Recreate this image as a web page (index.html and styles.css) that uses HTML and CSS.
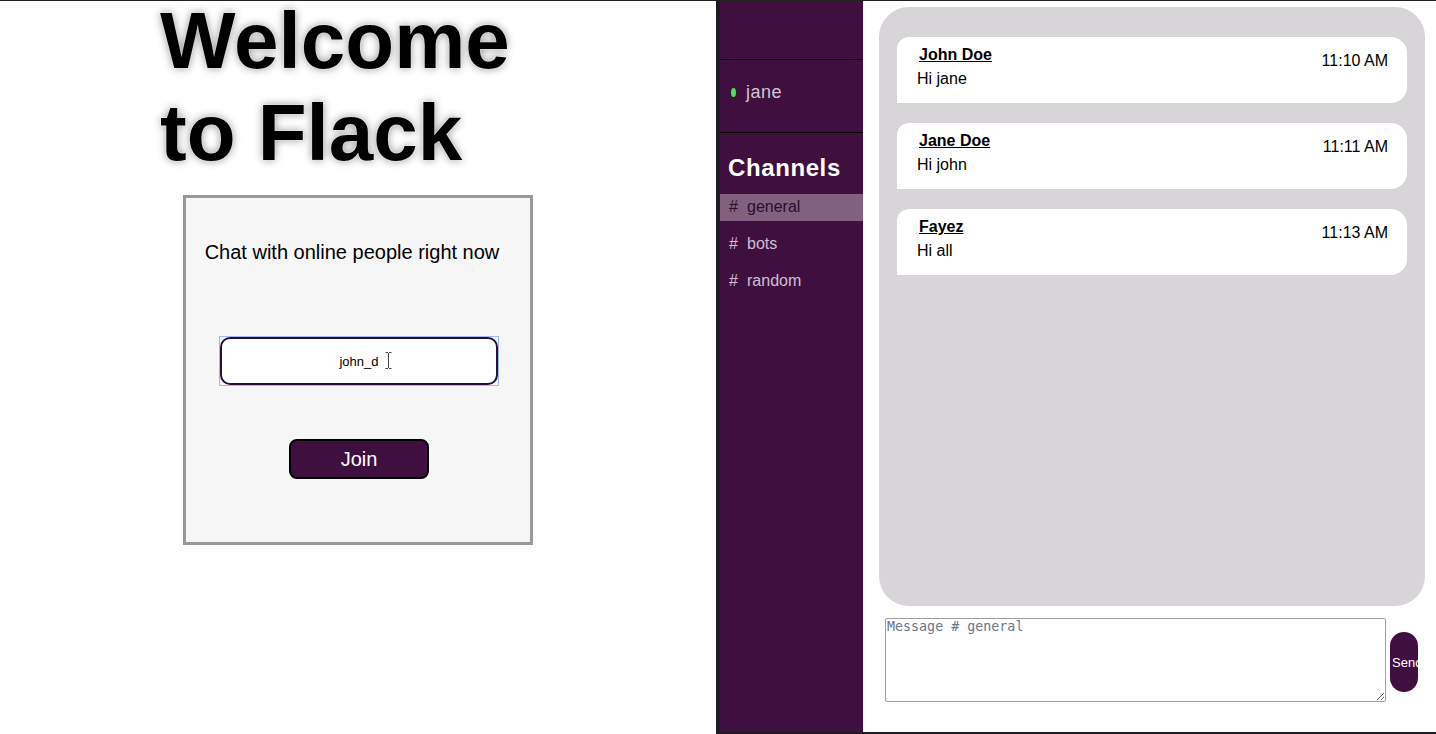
FILE: index.html
```html
<!DOCTYPE html>
<html lang="en">
<head>
<meta charset="utf-8">
<title>Flack</title>
<link rel="stylesheet" href="styles.css">
</head>
<body>
<div class="page">
  <section class="welcome">
    <h1 class="title">Welcome<br>to Flack</h1>
    <div class="login-card">
      <p class="tagline">Chat with online people right now</p>
      <div class="name-field">
        <input class="name-input" type="text" value="john_d">
        <svg class="ibeam" width="7" height="17" viewBox="0 0 7 17"><path d="M0.5 0.5h2.5M4 0.5h2.5M3.5 1v15M0.5 16.5h2.5M4 16.5h2.5" stroke="#444" stroke-width="1" fill="none"/></svg>
      </div>
      <button class="join-btn">Join</button>
    </div>
  </section>
  <section class="app">
    <aside class="sidebar">
      <div class="sidebar-top"></div>
      <div class="user-row"><span class="status-dot"></span><span class="user-name">jane</span></div>
      <h2 class="channels-title">Channels</h2>
      <ul class="channel-list">
        <li class="channel active"><span class="hash">#</span>general</li>
        <li class="channel"><span class="hash">#</span>bots</li>
        <li class="channel"><span class="hash">#</span>random</li>
      </ul>
    </aside>
    <main class="chat">
      <div class="messages">
        <div class="msg">
          <div class="msg-body"><div class="msg-author">John Doe</div><div class="msg-text">Hi jane</div></div>
          <div class="msg-time">11:10 AM</div>
        </div>
        <div class="msg">
          <div class="msg-body"><div class="msg-author">Jane Doe</div><div class="msg-text">Hi john</div></div>
          <div class="msg-time">11:11 AM</div>
        </div>
        <div class="msg">
          <div class="msg-body"><div class="msg-author">Fayez</div><div class="msg-text">Hi all</div></div>
          <div class="msg-time">11:13 AM</div>
        </div>
      </div>
      <div class="composer">
        <textarea class="composer-input" placeholder="Message # general"></textarea>
        <button class="send-btn">Send</button>
      </div>
    </main>
  </section>
</div>
</body>
</html>
```

FILE: styles.css
```css
* { box-sizing: border-box; }
html, body { margin: 0; padding: 0; }
body {
  font-family: "Liberation Sans", Arial, sans-serif;
  background: #fff;
  color: #000;
  overflow: hidden;
}
.page {
  display: flex;
  height: 734px;
  border-top: 1px solid #222;
}
.welcome {
  width: 716px;
  flex: none;
  display: flex;
  flex-direction: column;
  align-items: center;
}
.title {
  align-self: flex-start;
  margin: -6px 0 0 160px;
  font-size: 80px;
  font-weight: bold;
  line-height: 92px;
  text-shadow: 0 0 2px #fff, 0 0 8px rgba(0,0,0,0.45);
}
.login-card {
  margin-top: 16px;
  width: 350px;
  height: 350px;
  border: 3px solid #999;
  background: #f6f6f6;
  display: flex;
  flex-direction: column;
  align-items: center;
}
.tagline {
  margin: 43px 0 0 -12px;
  font-size: 20px;
  line-height: 23px;
}
.name-field {
  position: relative;
  margin: 72px 0 0 2px;
  border: 1px solid #9dbaf2;
}
.name-input {
  display: block;
  width: 278px;
  height: 48px;
  border: 2px solid #2a0d3a;
  border-radius: 10px;
  background: #fff;
  text-align: center;
  font-family: "Liberation Sans", Arial, sans-serif;
  font-size: 13px;
  color: #000;
  outline: none;
}
.ibeam {
  position: absolute;
  left: 165px;
  top: 15px;
}
.join-btn {
  margin: 53px 0 0 2px;
  width: 140px;
  height: 40px;
  background: #3f0f3f;
  color: #fff;
  border: 2px solid #000;
  border-radius: 8px;
  font-family: "Liberation Sans", Arial, sans-serif;
  font-size: 20px;
}
.app {
  flex: 1;
  display: flex;
  border-left: 4px solid #1a1c21;
  border-bottom: 2px solid #1a1c21;
}
.sidebar {
  width: 143px;
  flex: none;
  background: #3f0f3f;
  color: #d2c4d2;
}
.sidebar-top {
  height: 59px;
  border-bottom: 1px solid #000;
}
.user-row {
  height: 73px;
  border-bottom: 1px solid #000;
  display: flex;
  align-items: center;
  padding: 0 0 7px 11px;
}
.status-dot {
  width: 5px;
  height: 9px;
  border-radius: 50%;
  background: #4ee44e;
  margin-right: 10px;
}
.user-name {
  font-size: 18px;
  letter-spacing: 0.5px;
}
.channels-title {
  margin: 20px 0 11px 8px;
  font-size: 24px;
  line-height: 30px;
  font-weight: bold;
  letter-spacing: 0.6px;
  color: #fff;
}
.channel-list {
  list-style: none;
  margin: 0;
  padding: 0;
}
.channel {
  height: 27px;
  line-height: 26px;
  padding-left: 9px;
  font-size: 16px;
  margin-bottom: 10px;
  color: #d0bfd0;
}
.channel.active {
  background: #83607f;
  color: #2d0d2d;
}
.hash {
  display: inline-block;
  width: 18px;
}
.chat {
  flex: 1;
  display: flex;
  flex-direction: column;
}
.messages {
  flex: 1;
  margin: 6px 11px 0 16px;
  background: #d7d5d8;
  border-radius: 30px;
  padding: 30px 18px;
  display: flex;
  flex-direction: column;
  gap: 20px;
}
.msg {
  height: 66px;
  background: #fff;
  border-radius: 12px 16px 16px 0;
  display: flex;
  justify-content: space-between;
  padding: 8px 19px 0 20px;
}
.msg-author {
  font-size: 16px;
  font-weight: bold;
  text-decoration: underline;
  line-height: 20px;
  margin-left: 2px;
}
.msg-text {
  font-size: 16px;
  line-height: 20px;
  margin-top: 4px;
}
.msg-time {
  font-size: 16px;
  line-height: 20px;
  margin-top: 6px;
}
.composer {
  display: flex;
  align-items: center;
  padding: 12px 0 30px 22px;
}
.composer-input {
  width: 501px;
  height: 84px;
  border: 1px solid #a0a0a0;
  border-radius: 2px;
  font-family: "DejaVu Sans Mono", monospace;
  font-size: 13.33px;
  padding: 0 1px;
  resize: both;
}
.composer-input::placeholder {
  color: #6a7788;
}
.send-btn {
  margin: 4px 0 0 4px;
  width: 28px;
  height: 60px;
  border: none;
  border-radius: 14px;
  background: #3f0f3f;
  color: #fff;
  font-family: "Liberation Sans", Arial, sans-serif;
  font-size: 13px;
  padding: 0 0 0 2px;
  text-align: left;
  white-space: nowrap;
  overflow: hidden;
}
```
